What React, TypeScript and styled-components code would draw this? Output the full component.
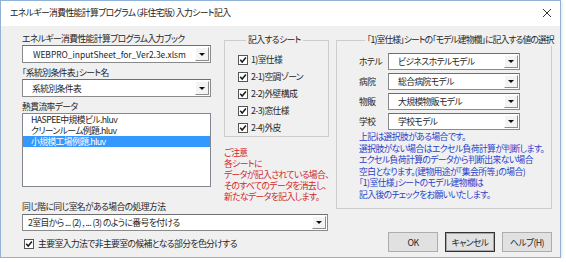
import React from "react";
import styled, { createGlobalStyle } from "styled-components";

const GlobalStyle = createGlobalStyle`
  body {
    margin: 0;
    background: #ffffff;
    font-family: "Noto Sans CJK JP", "Noto Sans", sans-serif;
    font-size: 8.8px;
    letter-spacing: -0.6px;
    font-feature-settings: "palt";
    color: #262626;
  }
`;

const Window = styled.div`
  box-sizing: border-box;
  width: 561px;
  height: 258px;
  border: 1px solid #8fb2d6;
  background: #f0f0f0;
  display: flex;
  flex-direction: column;
  box-shadow: 1px 1px 3px rgba(0, 0, 0, 0.12);
`;

const TitleBar = styled.div`
  height: 23px;
  background: #ffffff;
  display: flex;
  align-items: center;
  justify-content: space-between;
  padding: 0 8px 2px 9px;
`;

const Title = styled.span`
  color: #222;
`;

const Body = styled.div`
  flex: 1;
  display: grid;
  grid-template-columns: 202px 112px 216px;
  grid-template-rows: 168px 1fr;
  padding: 7px 8px 4px 21px;
`;

const LeftCol = styled.div`
  grid-column: 1;
  grid-row: 1;
  width: 189px;
  display: flex;
  flex-direction: column;
`;

const Label = styled.div<{ $gap?: number }>`
  line-height: 12px;
  height: 12px;
  margin-top: ${({ $gap }) => $gap ?? 0}px;
  white-space: nowrap;
`;

const Combo = styled.div<{ $h: number; $pad: number; $gap?: number }>`
  box-sizing: border-box;
  height: ${({ $h }) => $h}px;
  margin-top: ${({ $gap }) => $gap ?? 0}px;
  background: #ffffff;
  border: 1px solid #8a8a8a;
  border-top-color: #6e6e6e;
  display: flex;
  align-items: center;
  padding-left: ${({ $pad }) => $pad}px;
  white-space: nowrap;
`;

const ComboText = styled.span<{ $latin?: boolean }>`
  flex: 1;
  font-size: ${({ $latin }) => ($latin ? "8.5px" : "inherit")};
  letter-spacing: ${({ $latin }) => ($latin ? "-0.05px" : "inherit")};
  overflow: hidden;
`;

const DropButton = styled.span`
  box-sizing: border-box;
  width: 14px;
  height: calc(100% - 2px);
  margin-right: 1px;
  background: #f4f4f4;
  border: 1px solid;
  border-color: #ffffff #8c8c8c #8c8c8c #ffffff;
  display: flex;
  align-items: center;
  justify-content: center;
`;

const Arrow = styled.span`
  width: 0;
  height: 0;
  border-left: 3px solid transparent;
  border-right: 3px solid transparent;
  border-top: 3px solid #111;
`;

const ListBox = styled.div`
  box-sizing: border-box;
  height: 74px;
  background: #ffffff;
  border: 1px solid #828790;
  display: flex;
  flex-direction: column;
`;

const ListItem = styled.div<{ $selected?: boolean }>`
  height: 11px;
  line-height: 11px;
  padding-left: 8px;
  white-space: nowrap;
  background: ${({ $selected }) => ($selected ? "#3399ff" : "transparent")};
  color: ${({ $selected }) => ($selected ? "#ffffff" : "#262626")};
`;

const MidCol = styled.div`
  grid-column: 2;
  grid-row: 1;
  width: 105px;
  padding-top: 1px;
  display: flex;
  flex-direction: column;
`;

const Group = styled.fieldset<{ $h: number; $padLeft: number }>`
  box-sizing: border-box;
  height: ${({ $h }) => $h}px;
  margin: 0;
  padding: 5px 0 0 ${({ $padLeft }) => $padLeft}px;
  border: 1px solid #cdcdcd;
  min-width: 0;
`;

const Legend = styled.legend<{ $offset: number; $tight?: boolean }>`
  margin-left: ${({ $offset }) => $offset - 1}px;
  padding: 0 2px;
  line-height: 12px;
  white-space: nowrap;
  letter-spacing: ${({ $tight }) => ($tight ? "-0.9px" : "inherit")};
`;

const CheckRow = styled.label`
  height: 17px;
  display: flex;
  align-items: center;
  gap: 3px;
  white-space: nowrap;
`;

const Note = styled.div<{ $color: string; $lh: number; $gap: number }>`
  color: ${({ $color }) => $color};
  line-height: ${({ $lh }) => $lh}px;
  margin-top: ${({ $gap }) => $gap}px;
  white-space: nowrap;
`;

const RightCol = styled.div`
  grid-column: 3;
  grid-row: 1 / 3;
  padding-top: 1px;
  padding-bottom: 1px;
  display: flex;
  flex-direction: column;
`;

const ModelGrid = styled.div`
  display: grid;
  grid-template-columns: 29px 132px;
  grid-auto-rows: 20px;
  align-items: center;
`;

const BottomSection = styled.div`
  grid-column: 1 / 3;
  grid-row: 2;
  width: 306px;
  display: flex;
  flex-direction: column;
`;

const BottomCheck = styled(CheckRow)`
  margin-top: 4px;
  padding-left: 2px;
  gap: 4px;
`;

const ButtonRow = styled.div`
  margin-top: auto;
  display: flex;
  justify-content: flex-end;
  gap: 7px;
`;

const Button = styled.button<{ $default?: boolean }>`
  box-sizing: border-box;
  width: 50px;
  height: 20px;
  margin: 0;
  padding: 0;
  font: inherit;
  letter-spacing: inherit;
  color: #262626;
  background: #e1e1e1;
  border: 1px solid ${({ $default }) => ($default ? "#333333" : "#adadad")};
  box-shadow: ${({ $default }) => ($default ? "inset 0 0 0 1px #a8a8a8" : "none")};
`;

function CheckIcon() {
  return (
    <svg width="10" height="10" viewBox="0 0 10 10">
      <rect x="0.5" y="0.5" width="9" height="9" fill="#ffffff" stroke="#555" />
      <path d="M2.2 4.8 L4.2 7 L7.9 2.6" fill="none" stroke="#1a1a1a" strokeWidth="1.5" />
    </svg>
  );
}

function CloseIcon() {
  return (
    <svg width="10" height="10" viewBox="0 0 10 10">
      <path d="M1 1 L9 9 M9 1 L1 9" stroke="#333" strokeWidth="1" />
    </svg>
  );
}

function ComboBox(props: { text: string; h: number; pad: number; latin?: boolean; gap?: number }) {
  return (
    <Combo $h={props.h} $pad={props.pad} $gap={props.gap}>
      <ComboText $latin={props.latin}>{props.text}</ComboText>
      <DropButton>
        <Arrow />
      </DropButton>
    </Combo>
  );
}

const sheets = ["1)室仕様", "2-1)空調ゾーン", "2-2)外壁構成", "2-3)窓仕様", "2-4)外皮"];

const models = [
  ["ホテル", "ビジネスホテルモデル"],
  ["病院", "総合病院モデル"],
  ["物販", "大規模物販モデル"],
  ["学校", "学校モデル"],
];

const files = ["HASPEE中規模ビル.hluv", "クリーンルーム例題.hluv", "小規模工場例題.hluv"];

export default function App() {
  return (
    <>
      <GlobalStyle />
      <Window>
        <TitleBar>
          <Title>エネルギー消費性能計算プログラム（非住宅版）入力シート記入</Title>
          <CloseIcon />
        </TitleBar>
        <Body>
          <LeftCol>
            <Label>エネルギー消費性能計算プログラム入力ブック</Label>
            <ComboBox text="WEBPRO_inputSheet_for_Ver2.3e.xlsm" h={18} pad={10} latin />
            <Label $gap={4}>「系統別条件表」シート名</Label>
            <ComboBox text="系統別条件表" h={18} pad={9} />
            <Label $gap={4}>熱貫流率データ</Label>
            <ListBox>
              {files.map((f, i) => (
                <ListItem key={f} $selected={i === 2}>
                  {f}
                </ListItem>
              ))}
            </ListBox>
          </LeftCol>

          <MidCol>
            <Group $h={105} $padLeft={13}>
              <Legend $offset={9}>記入するシート</Legend>
              {sheets.map((s) => (
                <CheckRow key={s}>
                  <CheckIcon />
                  {s}
                </CheckRow>
              ))}
            </Group>
            <Note $color="#d02828" $lh={11} $gap={10}>
              ご注意
              <br />
              各シートに
              <br />
              データが記入されている場合、
              <br />
              そのすべてのデータを消去し、
              <br />
              新たなデータを記入します。
            </Note>
          </MidCol>

          <RightCol>
            <Group $h={175} $padLeft={22}>
              <Legend $offset={7} $tight>
                「1)室仕様」シートの「モデル建物欄」に記入する値の選択
              </Legend>
              <ModelGrid>
                {models.map(([k, v]) => (
                  <React.Fragment key={k}>
                    <span>{k}</span>
                    <ComboBox text={v} h={17} pad={9} />
                  </React.Fragment>
                ))}
              </ModelGrid>
              <Note $color="#2a3fc8" $lh={11.5} $gap={0}>
                上記は選択肢がある場合です。
                <br />
                選択肢がない場合はエクセル負荷計算が判断します。
                <br />
                エクセル負荷計算のデータから判断出来ない場合
                <br />
                空白となります。(建物用途が「集会所等」の場合)
                <br />
                「1)室仕様」シートのモデル建物欄は
                <br />
                記入後のチェックをお願いいたします。
              </Note>
            </Group>
            <ButtonRow>
              <Button>OK</Button>
              <Button $default>キャンセル</Button>
              <Button>ヘルプ(H)</Button>
            </ButtonRow>
          </RightCol>

          <BottomSection>
            <Label>同じ階に同じ室名がある場合の処理方法</Label>
            <ComboBox text="2室目から ... (2) , ... (3) のように番号を付ける" h={17} pad={5} gap={1} />
            <BottomCheck>
              <CheckIcon />
              主要室入力法で非主要室の候補となる部分を色分けする
            </BottomCheck>
          </BottomSection>
        </Body>
      </Window>
    </>
  );
}
